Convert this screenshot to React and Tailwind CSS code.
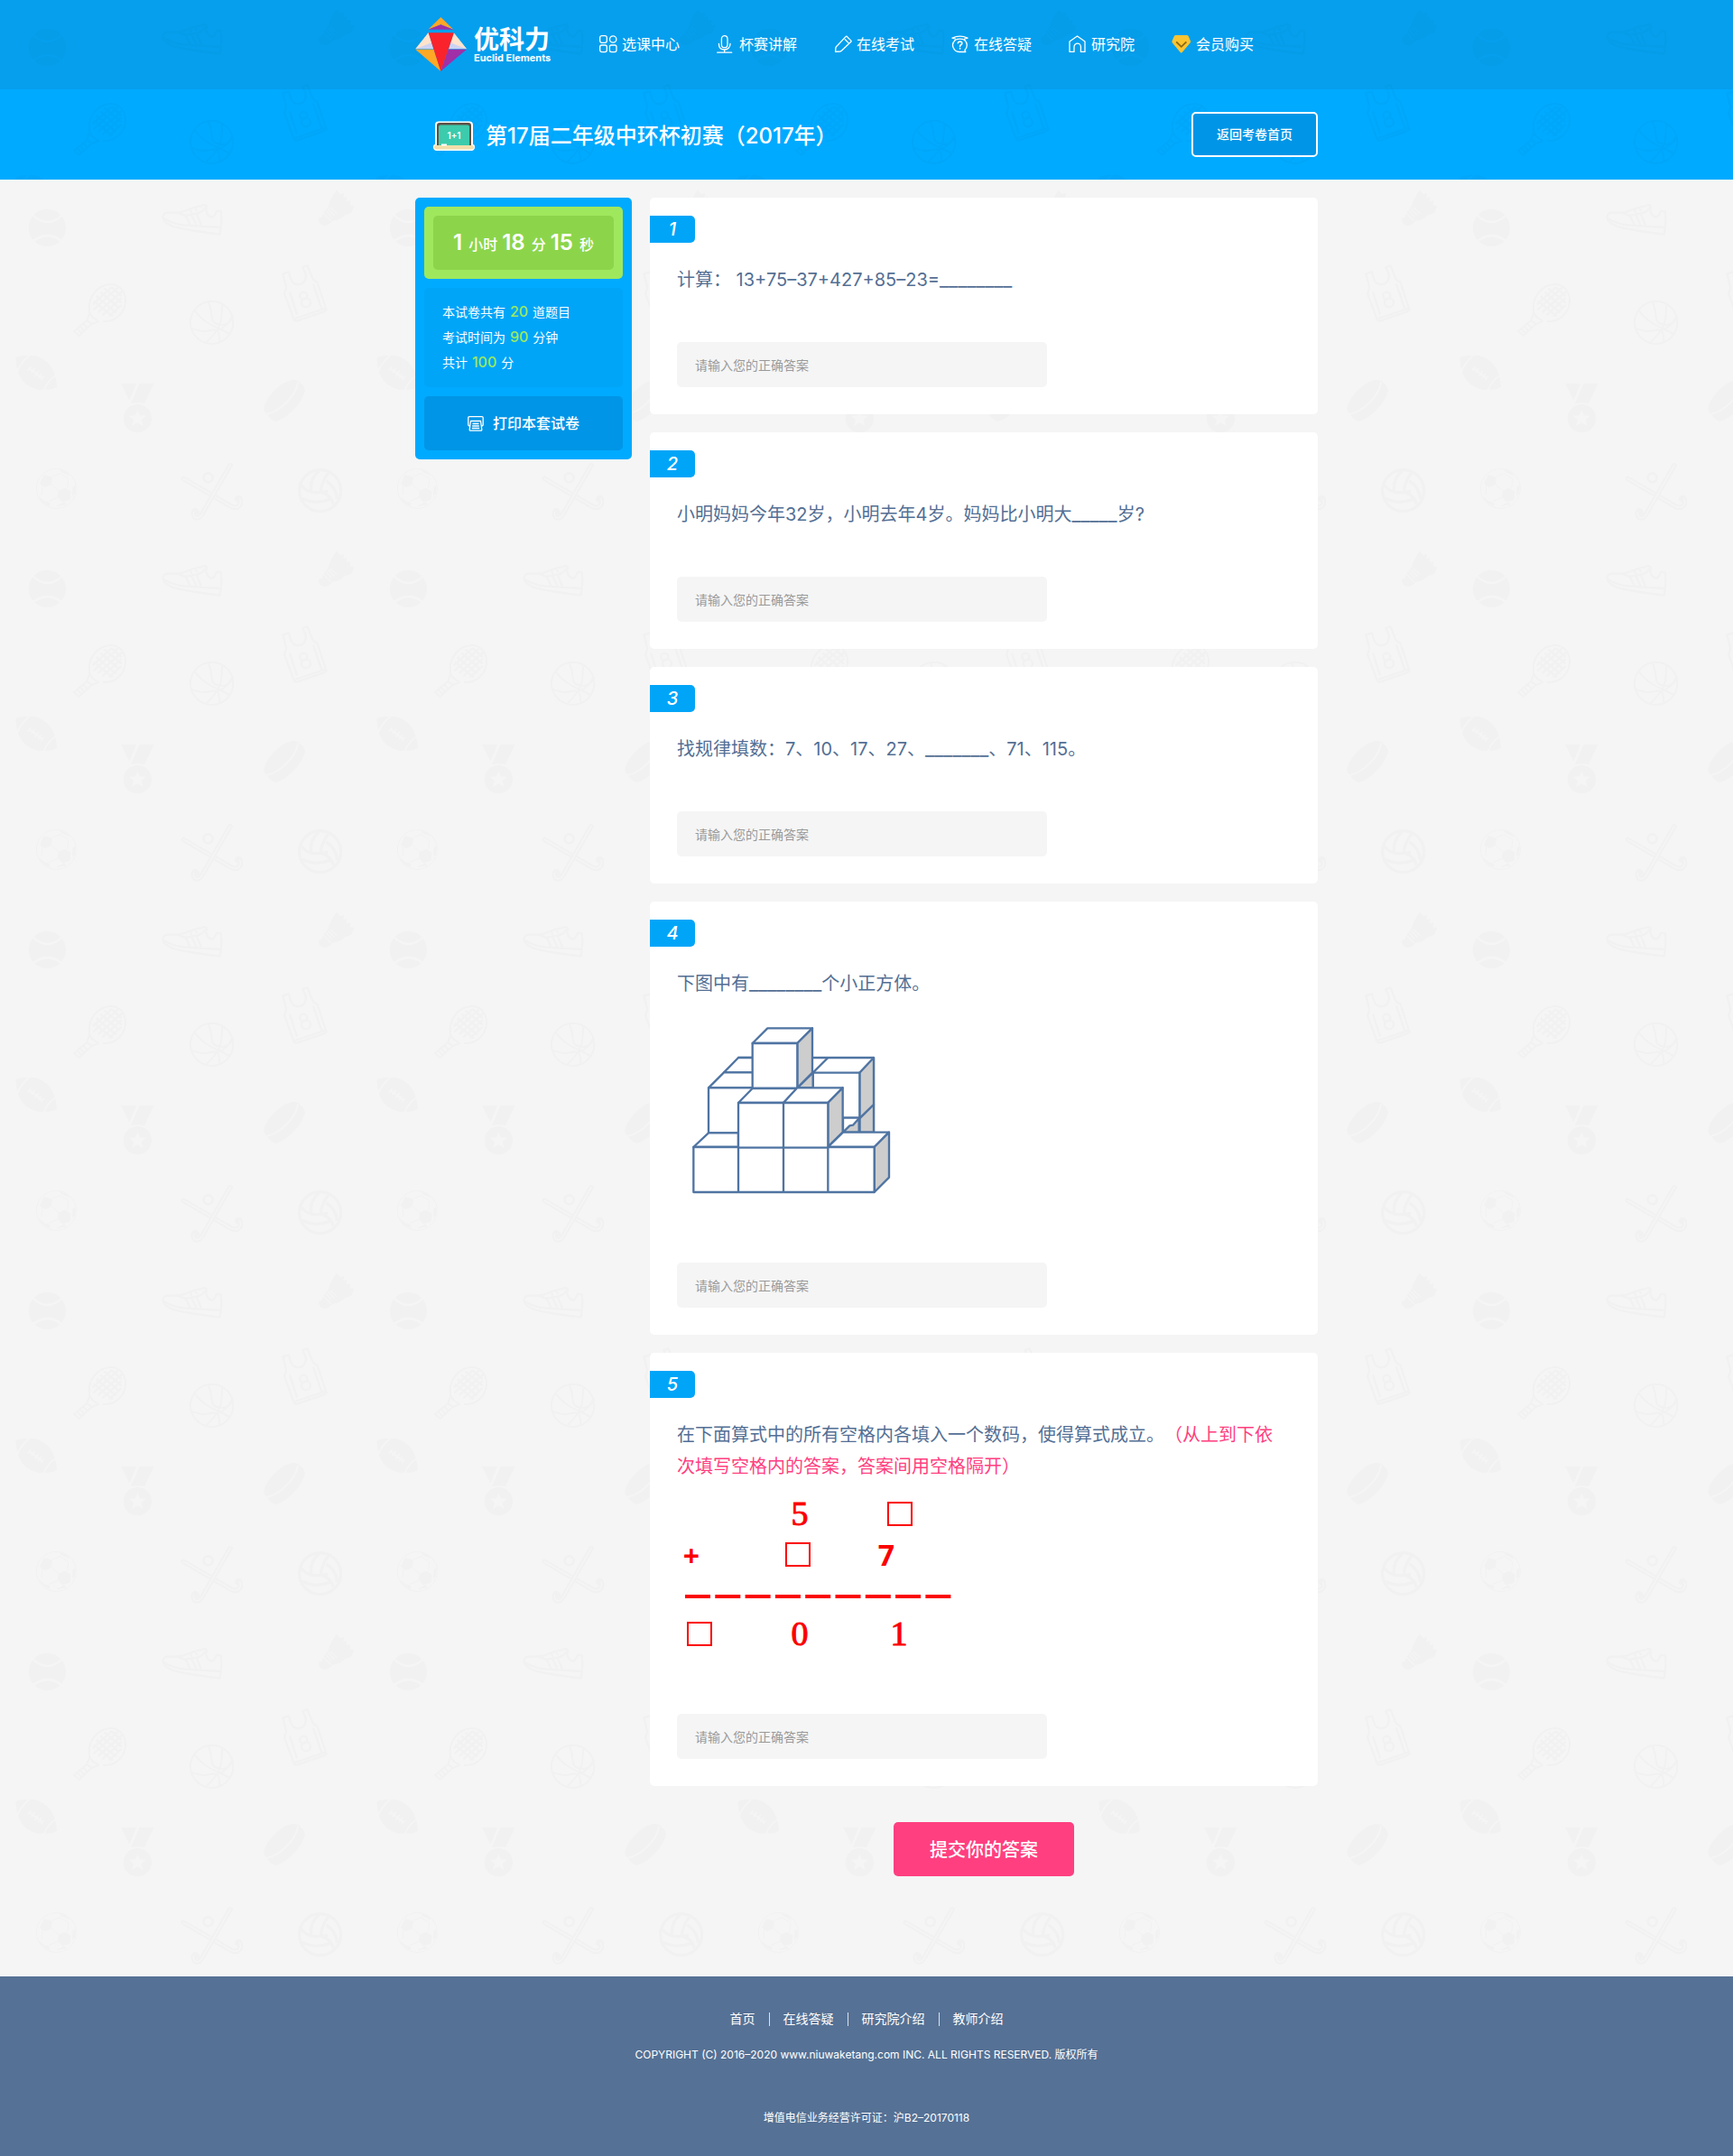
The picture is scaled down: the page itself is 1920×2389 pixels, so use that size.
import { useId } from "react";

const line = { fill: "none", stroke: "currentColor", strokeLinecap: "round", strokeLinejoin: "round" };

/* Sports doodles, repeated on a 400px tile. `ink` draws the shapes, `paper` the gaps inside them. */
function SportsPattern({ ink, paper, offset = 0 }) {
  const id = useId();
  return (
    <svg className="absolute inset-0 h-full w-full" aria-hidden="true">
      <defs>
        <pattern id={id} x="0" y={offset} width="400" height="400" patternUnits="userSpaceOnUse" viewBox="0 0 1200 1200">
          {/* tennis ball */}
          <circle cx="157" cy="157" r="62" fill={ink} />
          <g fill="none" stroke={paper} strokeWidth="8">
            <path d="M106 112q51 52 104 0M108 204q50-42 100 0" />
          </g>
          {/* trainer */}
          <g fill="none" stroke={ink} strokeWidth="7" strokeLinecap="round" strokeLinejoin="round">
            <path d="M541 121c2-10 8-14 16-14h34c32-4 50-22 78-22 8-6 18-4 18 4l-3 8c4 20 14 26 24 24 8-4 8-16 14-20l12 2c4 24 2 48-3 76-58-8-118-14-160-28-20-8-30-18-30-30z" />
            <path d="M545 127c24 14 44 20 70 22l120 7M590 107l24 9c30-4 60-6 66-24M618 119l14 27M638 117l14 29M654 113l14 33M632 96l4 8M650 92l4 8" />
          </g>
          {/* shuttlecock */}
          <path
            d="M1061 122q-6 26 18 28 14 0 24-14 34-8 44-22c8 0 16-4 22-8l8-22-14-2 2-16-14 4 2-16-12 4 2-16-12 4-12-14c-14 18-24 36-28 56-10 10-18 22-22 34z"
            fill={ink}
          />
          <path d="M1074 108l26 26M1082 98l20 24M1090 94l22 22M1098 90l22 20" stroke={paper} strokeWidth="4" />
          {/* racket */}
          <g fill="none" stroke={ink} strokeWidth="6" strokeLinejoin="round">
            <path d="M298 440c-10-48 24-94 70-95 38 0 54 36 48 66-6 34-36 60-74 57M298 440l-10 26-42 34 17 16 42-39 24-9M298 440c4 12 14 20 30 27M288 464l18 14M276 474l14 16M266 484l14 16M257 492l14 16" />
            <path d="M312 400l62 52M320 384l66 56M334 370l62 54M346 358l58 48M372 356l32 28M308 412l64-58M310 430l82-74M326 438l80-70M340 448l64-58M362 452l42-38" strokeWidth="7" />
          </g>
          {/* basketball */}
          <g fill="none" stroke={ink} strokeWidth="6">
            <circle cx="704" cy="472" r="71" />
            <path d="M692 404c24 46-6 72 46 76 22-2 32-16 36-30M738 410c0 60-2 80-52 128M645 430c44 60 100 62 118 82M634 490c60 24 60 0 88 8 26-8 38-24 50-46M722 498c8 12 8 26 8 38" />
          </g>
          {/* singlet */}
          <g fill="none" stroke={ink} strokeWidth="7" strokeLinejoin="round">
            <path d="M940 310l20-6c6 24 10 40 30 42 24-2 28-20 26-36l-10-22 16-5 14 36c4 12 10 16 18 18l31 93-8 6-90 31-9-2-33-90c6-12 8-20 4-30zM963 370l24 76M1041 344l28 82M980 459l102-34" />
            <circle cx="1009" cy="383" r="12" />
            <circle cx="1017" cy="406" r="15" />
          </g>
          {/* rugby ball */}
          <path d="M52 588q20-8 64-6c44 12 70 46 73 104q-16 12-62 9c-46-10-72-40-75-107z" fill={ink} />
          <path d="M100 578q-34 30-42 56M186 648q-28 16-40 50M96 624l46 34" fill="none" stroke={paper} strokeWidth="6" />
          <path d="M92 632l12-14M104 640l12-16M116 650l12-18M126 658l12-16M136 664l10-14" stroke={paper} strokeWidth="5" />
          {/* medal */}
          <path d="M402 674h52l-24 57zM464 674h48l-32 68q-24-6-46 0z" fill={ink} />
          <circle cx="457" cy="791" r="47" fill={ink} />
          <path d="M457 762l8 19 21 1-16 14 6 21-19-12-19 12 6-21-16-14 21-1z" fill={paper} />
          {/* puck */}
          <path d="M877 758c4-36 60-96 102-96 18 4 34 22 35 36-6 34-54 92-98 103-14-4-26-16-30-26-6-4-9-10-9-17z" fill={ink} />
          <path d="M886 777c44-10 96-56 105-108" fill="none" stroke={paper} strokeWidth="6" />
          {/* football */}
          <circle cx="187" cy="1024" r="66" fill="none" stroke={ink} strokeWidth="3" />
          <path d="M146 978l28 8-4 26-22 8-16-12zM194 1032l22-10 20 12-4 28-26 6-14-16zM196 960q30 6 36 22l-26-12zM128 1050l20 16 18 6 0 12q-30-12-38-34zM242 1016l10-2-4 28-8 6zM184 1084l30-16 8 10z" fill={ink} />
          <path d="M174 984l26-10 28 18-4 30M170 1010l26 22M138 1046l2-32M192 1054l-30 12" fill="none" stroke={ink} strokeWidth="3" />
          {/* hockey sticks */}
          <g fill="none" strokeLinecap="round" strokeLinejoin="round">
            <path d="M610 991l158 92c20 10 36-2 30-24-2-6-8-6-10 0" stroke={ink} strokeWidth="17" />
            <path d="M610 991l158 92c20 10 36-2 30-24" stroke={paper} strokeWidth="5" />
            <path d="M765 947l-90 156c-12 26-34 24-32 0 2-6 8-8 12 0" stroke={ink} strokeWidth="17" />
            <path d="M765 947l-90 156c-12 26-34 24-32 0" stroke={paper} strokeWidth="5" />
            <circle cx="692" cy="988" r="15" stroke={ink} strokeWidth="8" />
          </g>
          {/* volleyball */}
          <g fill="none" stroke={ink} strokeWidth="10">
            <circle cx="1064" cy="1031" r="69" />
            <path d="M1060 966c-20 16-30 40-26 70M1092 972c-14 18-26 36-26 64M1000 1012c18 24 40 28 66 24l24-2M1084 1000c20 10 36 34 36 60M1004 1056c30 16 60 16 92 4M1070 1036c20 8 34 20 38 40" />
          </g>
        </pattern>
      </defs>
      <rect width="100%" height="100%" fill={`url(#${id})`} />
    </svg>
  );
}

function LogoMark() {
  return (
    <svg className="h-[60px] w-[57px]" viewBox="61 53 171 180" aria-hidden="true">
      <path d="M146 53l42 41-42-16-42 16z" fill="#ffa826" />
      <path d="M146 78l42 16h-84z" fill="#a02fa8" />
      <path d="M105 105l17 54H62z" fill="#cdd3f3" />
      <path d="M105 105l10 33-53 21z" fill="#ffe3cc" />
      <path d="M189 105l-17 54h60z" fill="#cdd3f3" />
      <path d="M189 105l-10 33 53 21z" fill="#ffe3cc" />
      <path d="M62 160h61l23 73z" fill="#ffa826" />
      <path d="M232 160h-61l-25 73z" fill="#a02fa8" />
      <path d="M105 105h85l-44 128z" fill="#fa232b" />
    </svg>
  );
}

function BlackboardIcon() {
  return (
    <svg className="h-[34px] w-[46px]" viewBox="0 0 46 34" aria-hidden="true">
      <path d="M6 0.500h34q4 0 4 4V26q2 0 2 3t-3 4H3q-3-1-3-4t2-3V4.500q0-4 4-4z" fill="#fff" />
      <path d="M7 2h32q3 0 3 3v22H4V5q0-3 3-3z" fill="#5b5047" />
      <path d="M8 4.500h30q2 0 2 2V27H6V6.500q0-2 2-2z" fill="#3ccbac" />
      <rect x="1" y="27" width="44" height="4.500" rx="2" fill="#f3deaa" />
      <rect x="9" y="25.500" width="6" height="2" fill="#fff" />
      <text x="23" y="20" textAnchor="middle" fill="#fff" fontSize="10" fontWeight="600" fontFamily="Inter, sans-serif">1+1</text>
    </svg>
  );
}

const icons = {
  grid: (
    <svg className="size-5" viewBox="0 0 20 20" strokeWidth="1.300" {...line}>
      <rect x="0.700" y="0.700" width="7.600" height="7.600" rx="2" />
      <circle cx="15.200" cy="4.500" r="3.700" />
      <rect x="0.700" y="11" width="7.600" height="7.600" rx="2" />
      <rect x="11.400" y="11" width="7.600" height="7.600" rx="2" />
    </svg>
  ),
  mic: (
    <svg className="size-5" viewBox="0 0 20 20" strokeWidth="1.300" {...line}>
      <rect x="5.400" y="0.700" width="6.600" height="13" rx="3.300" />
      <path d="M2.400 9.500c0 4.200 2.600 6.500 6.300 6.500s6.300-2.300 6.300-6.500M8.700 16v3M0.700 19.200h16" />
    </svg>
  ),
  pencil: (
    <svg className="size-5" viewBox="0 0 20 20" strokeWidth="1.300" {...line}>
      <path d="M14.300 1.500l4.600 4.600q.5.600-.1 1.200L8.300 17.300q-.6.600-1.400.7l-5.300.4.3-4.400q0-.7.600-1.300L13 1.600q.7-.6 1.300-.1M12.300 4.800l3.600 3.600" />
    </svg>
  ),
  question: (
    <svg className="size-5" viewBox="0 0 20 20" strokeWidth="1.300" {...line}>
      <path d="M4.200 3.800L1 3.200Q9.500-.8 18 3.200l-3.400.9M3.900 5.500q5.600-2.600 11.200 0M4.300 5.400a7.400 7.400 0 0 0 5.200 13.100h6.300l-.9-2a7.400 7.400 0 0 0-.2-11.100" />
      <path d="M7.300 8.600q.4-1.600 2.300-1.600 2.300.1 2.200 1.900 0 1.100-1.300 1.800-.9.500-.9 1.700M9.600 14.600v.3" strokeWidth="1.600" />
    </svg>
  ),
  house: (
    <svg className="size-5" viewBox="0 0 20 20" strokeWidth="1.300" {...line}>
      <path d="M1 7L9.500 1 18 7v11.400h-4.600v-5.500a3.700 3.700 0 0 0-7.400 0v5.500H1z" />
    </svg>
  ),
  gem: (
    <svg className="size-[22px]" viewBox="1 1 22 22" fill="none">
      <path d="M5.500 2h12.500q1 0 1.600.9l2.400 5.600q.4 1.100-.4 2L12.700 21q-1 1.200-2 0L1.900 10.500q-.8-.9-.4-2l2.400-5.600Q4.500 2 5.500 2z" fill="#fdc431" />
      <path d="M6.200 9.400l5.600 5.400 5.600-5.400" stroke="#8a6914" strokeWidth="1.800" />
    </svg>
  ),
};

const navItems = [
  ["选课中心", "grid"],
  ["杯赛讲解", "mic"],
  ["在线考试", "pencil"],
  ["在线答疑", "question"],
  ["研究院", "house"],
  ["会员购买", "gem"],
];

function PrinterIcon() {
  return (
    <svg className="h-[17px] w-[18px]" viewBox="0 0 18 17" strokeWidth="1.300" aria-hidden="true" {...line}>
      <path d="M2.500 11.500L.8 10V2q0-1.300 1.300-1.300h13.800q1.300 0 1.300 1.300v8l-1.700 1.500M3.500 5.500h11l1.300 9.500q.1 1.200-1 1.200H3.200q-1.100 0-1-1.200zM6 8.500h6M5.600 11h6.800M5.300 13.500h7.400" />
    </svg>
  );
}

function Blank({ children }) {
  return <span className="text-[22px] leading-none">{children}</span>;
}

function CubesFigure() {
  const edge = { stroke: "#4f74a2", strokeWidth: 7, strokeLinejoin: "round", fill: "#fff" };
  const shade = { ...edge, fill: "#cdcdcd" };
  return (
    <svg className="mt-5 block h-[220px] w-[250px]" viewBox="90 384 750 660" role="img" aria-label="小正方体堆叠图">
      <path d="M294 516h450v246H294z" {...edge} />
      <path d="M697 566l47-50v156l-47 46z" {...shade} />
      <path d="M697 718l47-46v92h-47z" {...shade} />
      <path d="M542 566h155v150H542z" {...edge} />
      <path d="M592 516l-50 50" {...edge} />
      <path d="M642 716h55v46h-55z" {...edge} />
      <path d="M642 764l22-22 11-2 20-22v46z" {...shade} />
      <path d="M246 565l48-49h60v49z" {...edge} />
      <path d="M195 616l51-51h110v51z" {...edge} />
      <path d="M195 616h150v150H195z" {...edge} />
      <path d="M490 616l52-50v50z" {...shade} />
      <path d="M341 468l50-50h149l-50 50z" {...edge} />
      <path d="M490 468l50-50v148l-50 50z" {...shade} />
      <path d="M341 468h149v150H341z" {...edge} />
      <path d="M294 666l47-48h149l-46 48z" {...edge} />
      <path d="M444 666l46-50h151l-50 50z" {...edge} />
      <path d="M592 666l49-50v148l-49 48z" {...shade} />
      <path d="M145 813l50-47h99v47z" {...edge} />
      <path d="M592 813l50-49h153l-49 49z" {...edge} />
      <path d="M746 813l49-49v150l-49 49z" {...shade} />
      <path d="M294 666h150v149H294zM444 666h148v149H444zM145 813h149v150H145zM294 815h150v148H294zM444 815h148v148H444zM592 813h154v150H592z" {...edge} />
    </svg>
  );
}

function AdditionFigure() {
  const serif = { fontFamily: '"Liberation Serif", serif', fontSize: 38, stroke: "#fb0000", strokeWidth: 1 };
  const sans = { fontFamily: '"Open Sans", sans-serif', fontSize: 32, fontWeight: 700 };
  return (
    <svg className="block h-[205px] w-[310px]" viewBox="0 2 310 205" fill="#fb0000">
      <text x="136" y="49" textAnchor="middle" {...serif}>5</text>
      <text x="16" y="95" textAnchor="middle" {...sans}>+</text>
      <text x="232" y="94" textAnchor="middle" {...sans}>7</text>
      <text x="136" y="182" textAnchor="middle" {...serif}>0</text>
      <text x="246" y="182" textAnchor="middle" {...serif}>1</text>
      <g fill="none" stroke="#fb0000" strokeWidth="2">
        <path d="M234 24h26v25h-26zM121 69h26v25h-26zM12 157h26v25h-26z" />
      </g>
      <path d="M9 128h295" stroke="#fb0000" strokeWidth="4" strokeDasharray="28 5.300" />
    </svg>
  );
}

const questions = [
  { body: <>计算： 13+75–37+427+85–23=<Blank>________</Blank></> },
  { body: <>小明妈妈今年32岁，小明去年4岁。妈妈比小明大<Blank>_____</Blank>岁?</> },
  { body: <>找规律填数：7、10、17、27、<Blank>_______</Blank>、71、115。</> },
  { body: <>下图中有<Blank>________</Blank>个小正方体。</>, figure: <CubesFigure /> },
  {
    body: (
      <>
        在下面算式中的所有空格内各填入一个数码，使得算式成立。
        <span className="text-[#ff3f80]">（从上到下依次填写空格内的答案，答案间用空格隔开）</span>
      </>
    ),
    figure: <AdditionFigure />,
  },
];

function Question({ number, body, figure }) {
  const fieldId = `answer-${number}`;
  return (
    <li className="rounded-[5px] bg-white py-5">
      <div className="flex h-[30px] w-[50px] items-center justify-center rounded-r-[5px] bg-[#00a5f8] text-xl font-medium text-white italic">
        {number}
      </div>
      <div className="pt-6 pr-10 pb-[10px] pl-[30px]">
        <label htmlFor={fieldId} className="block text-xl leading-[35px] text-[#546f94]">
          {body}
        </label>
        {figure}
        <input
          id={fieldId}
          type="text"
          placeholder="请输入您的正确答案"
          className="mt-[51px] block h-[50px] w-full max-w-[410px] rounded-[5px] bg-[#f5f5f5] px-5 text-sm text-[#546f94] placeholder:text-[#999]"
        />
      </div>
    </li>
  );
}

function Figure({ children }) {
  return <b className="mx-px text-base leading-none font-medium text-[#9fe85d]">{children}</b>;
}

const footerLinks = ["首页", "在线答疑", "研究院介绍", "教师介绍"];

export default function App() {
  return (
    <div className="flex min-h-screen flex-col bg-[#f5f5f5] font-['Inter','Noto_Sans_CJK_SC',sans-serif] [text-spacing-trim:space-all]">
      <header className="relative bg-[#00aaff] text-white">
        <SportsPattern ink="#00a6f9" paper="#00aaff" />
        <div className="relative bg-[#32465a]/10">
          <div className="mx-auto flex h-[99px] w-full max-w-[1000px] items-center pb-[2px]">
            <a href="#" className="flex w-[204px] items-center gap-2">
              <LogoMark />
              <span className="flex flex-col pt-[2px] whitespace-nowrap">
                <span className="text-[28px] leading-7 font-bold">优科力</span>
                <span className="text-[11px] leading-3 font-bold">Euclid Elements</span>
              </span>
            </a>
            <nav className="flex gap-[41px]">
              {navItems.map(([label, icon]) => (
                <a key={label} href="#" className="flex items-center gap-[5px] text-base whitespace-nowrap">
                  {icons[icon]}
                  {label}
                </a>
              ))}
            </nav>
          </div>
        </div>
        <div className="relative mx-auto flex h-[100px] w-full max-w-[1000px] items-center pl-5">
          <div className="flex flex-1 items-center gap-3 pt-[3px]">
            <BlackboardIcon />
            <h1 className="text-2xl font-medium">第17届二年级中环杯初赛（2017年）</h1>
          </div>
          <button type="button" className="h-[50px] w-[140px] rounded-[5px] border-2 border-white bg-[#0095e6] text-sm font-medium">
            返回考卷首页
          </button>
        </div>
      </header>

      <main className="relative flex-1">
        <SportsPattern ink="#f1f1f1" paper="#f5f5f5" offset={1} />
        <div className="relative mx-auto flex w-full max-w-[1000px] items-start gap-5 pt-5 pb-[111px]">
          <aside className="flex w-60 flex-col gap-[10px] rounded-[5px] bg-[#00aaff] p-[10px] text-white">
            <div className="rounded-[5px] bg-[#9fe85d] p-[10px]">
              <p className="flex h-[60px] items-baseline justify-center gap-[5px] rounded-[5px] bg-[#8cd54b] pt-3 text-base leading-9 font-medium whitespace-nowrap">
                <span><b className="mr-[7px] text-2xl leading-9 font-semibold">1</b>小时</span>
                <span><b className="mr-[7px] text-2xl leading-9 font-semibold">18</b>分</span>
                <span><b className="mr-[7px] text-2xl leading-9 font-semibold">15</b>秒</span>
              </p>
            </div>
            <div className="rounded-[5px] bg-[#00a5f8] px-5 py-[13px] text-sm leading-7">
              <p>本试卷共有 <Figure>20</Figure> 道题目</p>
              <p>考试时间为 <Figure>90</Figure> 分钟</p>
              <p>共计 <Figure>100</Figure> 分</p>
            </div>
            <button type="button" className="flex h-[60px] items-center justify-center gap-[10px] rounded-[5px] bg-[#0095e6] text-base font-medium">
              <PrinterIcon />
              打印本套试卷
            </button>
          </aside>

          <form className="flex min-w-0 flex-1 flex-col items-center gap-10" onSubmit={(e) => e.preventDefault()}>
            <ol className="flex w-full flex-col gap-5">
              {questions.map((q, i) => (
                <Question key={i} number={i + 1} {...q} />
              ))}
            </ol>
            <button type="submit" className="h-[60px] w-[200px] rounded-[5px] bg-[#ff3f80] pt-[2px] text-xl font-medium text-white">
              提交你的答案
            </button>
          </form>
        </div>
      </main>

      <footer className="flex flex-col items-center bg-[#557195] pt-[37px] pb-8 text-center text-xs text-white">
        <nav className="flex items-center text-sm leading-5">
          {footerLinks.map((label, i) => (
            <span key={label} className="flex items-center">
              {i > 0 && <span className="mx-[15px] h-[15px] w-px bg-white/80" />}
              <a href="#">{label}</a>
            </span>
          ))}
        </nav>
        <p className="mt-5 leading-5">COPYRIGHT (C) 2016–2020 www.niuwaketang.com INC. ALL RIGHTS RESERVED. 版权所有</p>
        <p className="mt-[50px] leading-5">增值电信业务经营许可证：沪B2–20170118</p>
      </footer>
    </div>
  );
}
